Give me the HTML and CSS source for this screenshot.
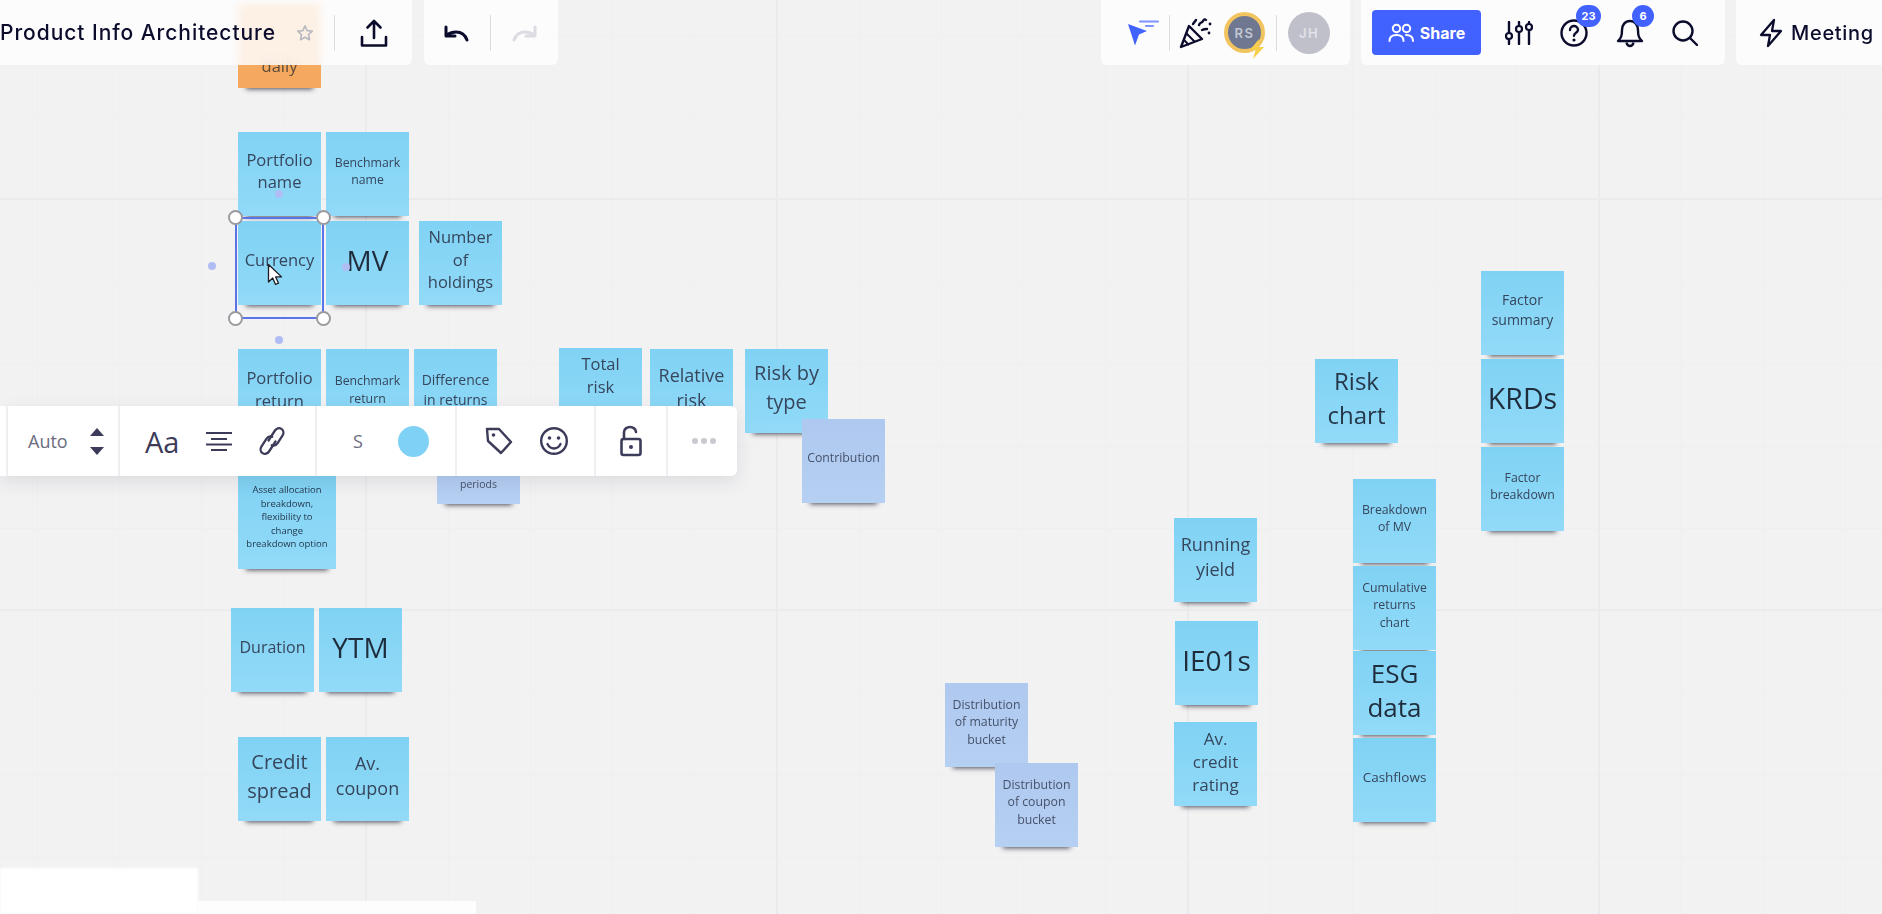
FILE: index.html
```html
<!DOCTYPE html>
<html lang="en">
<head>
<meta charset="utf-8">
<title>Product Info Architecture</title>
<link rel="stylesheet" href="styles.css">
</head>
<body>
<div class="board">
  <div class="canvas">
    <div class="sticky orange s-daily fs16"><span>daily</span></div>
    <div class="sticky s-pname fs16"><span>Portfolio<br>name</span></div>
    <div class="sticky s-bname fs12"><span>Benchmark<br>name</span></div>
    <div class="sticky s-currency fs16"><span>Currency</span></div>
    <div class="sticky s-mv fs28"><span>MV</span></div>
    <div class="sticky s-holdings fs16"><span>Number<br>of<br>holdings</span></div>
    <div class="sticky s-preturn fs16 low"><span>Portfolio<br>return</span></div>
    <div class="sticky s-breturn fs12 low"><span>Benchmark<br>return</span></div>
    <div class="sticky s-diff fs14 low"><span>Difference<br>in returns</span></div>
    <div class="sticky s-total fs16"><span>Total<br>risk<br>&nbsp;</span></div>
    <div class="sticky s-relative fs18"><span>Relative<br>risk</span></div>
    <div class="sticky s-type fs20"><span>Risk by<br>type</span></div>
    <div class="sticky violet s-contrib fs12"><span>Contribution</span></div>
    <div class="sticky s-asset fs9"><span>Asset allocation<br>breakdown,<br>flexibility to<br>change<br>breakdown option</span></div>
    <div class="sticky violet s-periods fs10"><span>periods</span></div>
    <div class="sticky s-duration fs15"><span>Duration</span></div>
    <div class="sticky s-ytm fs28"><span>YTM</span></div>
    <div class="sticky s-spread fs20"><span>Credit<br>spread</span></div>
    <div class="sticky s-coupon fs18"><span>Av.<br>coupon</span></div>
    <div class="sticky violet s-dmat fs12"><span>Distribution<br>of maturity<br>bucket</span></div>
    <div class="sticky violet s-dcou fs12"><span>Distribution<br>of coupon<br>bucket</span></div>
    <div class="sticky s-yield fs18"><span>Running<br>yield</span></div>
    <div class="sticky s-ie fs28"><span>IE01s</span></div>
    <div class="sticky s-rating fs17"><span>Av.<br>credit<br>rating</span></div>
    <div class="sticky s-bmv fs12"><span>Breakdown<br>of MV</span></div>
    <div class="sticky s-cum fs12"><span>Cumulative<br>returns<br>chart</span></div>
    <div class="sticky s-esg fs26"><span>ESG<br>data</span></div>
    <div class="sticky s-cash fs13"><span>Cashflows</span></div>
    <div class="sticky s-risk fs24"><span>Risk<br>chart</span></div>
    <div class="sticky s-fsum fs14"><span>Factor<br>summary</span></div>
    <div class="sticky s-krd fs30"><span>KRDs</span></div>
    <div class="sticky s-fbreak fs12"><span>Factor<br>breakdown</span></div>

    <div class="dot d1"></div>
    <div class="dot d2"></div>
    <div class="dot d3"></div>
    <div class="dot d4"></div>

    <div class="selection">
      <i class="handle tl"></i><i class="handle tr"></i><i class="handle bl"></i><i class="handle br"></i>
    </div>
    <svg class="pointer" width="16" height="24" viewBox="0 0 16 24"><path d="M1.5 1.5v17.5l4.2-4 2.8 6.5 3-1.3-2.8-6.3h5.8z" fill="#fff" stroke="#1c1c22" stroke-width="1.3" stroke-linejoin="round"/></svg>
  </div>

  <header class="topbar">
    <div class="group">
      <div class="panel panel-title">
        <span class="title">Product Info Architecture</span>
        <svg class="star" width="20" height="20" viewBox="0 0 24 24"><path d="M12 3.5l2.6 5.6 6.1.7-4.5 4.2 1.2 6-5.4-3-5.4 3 1.2-6-4.5-4.2 6.1-.7z" fill="none" stroke="#b9b9c0" stroke-width="2" stroke-linejoin="round"/></svg>
        <i class="vr"></i>
        <svg class="upload" width="28" height="30" viewBox="0 0 28 30"><path d="M14 20V3M7.5 9.5L14 3l6.500 6.500M2 19v8.500h24V19" fill="none" stroke="#0b0b2c" stroke-width="2.600" stroke-linecap="round" stroke-linejoin="round"/></svg>
      </div>
      <div class="panel panel-undo">
        <svg width="28" height="20" viewBox="0 0 28 20"><path d="M25 16c-2-5.500-6-8-11-8-3 0-6 .8-9 3M4 3v9h9" fill="none" stroke="#0b0b2c" stroke-width="3" stroke-linecap="round" stroke-linejoin="round" transform="translate(0 1)"/></svg>
        <i class="vr"></i>
        <svg width="28" height="20" viewBox="0 0 28 20"><path d="M3 16c2-5.500 6-8 11-8 3 0 6 .8 9 3M24 3v9h-9" fill="none" stroke="#dcdce2" stroke-width="3" stroke-linecap="round" stroke-linejoin="round" transform="translate(0 1)"/></svg>
      </div>
    </div>
    <div class="group">
      <div class="panel panel-people">
        <svg class="cursor-filter" width="32" height="26" viewBox="0 0 32 26"><path d="M1 4l19 7-8 3.500-4 11z" fill="#4262ff"/><path d="M13 1.500h18M19 6h7" stroke="#7f94ff" stroke-width="2.200" stroke-linecap="round"/></svg>
        <i class="vr"></i>
        <svg class="party" width="34" height="32" viewBox="0 0 34 32"><path d="M2 30L10 9l13 13z" fill="none" stroke="#0b0b2c" stroke-width="2.400" stroke-linejoin="round"/><path d="M7 16l9 9M5 23l5 5" stroke="#0b0b2c" stroke-width="2"/><path d="M14 7l3-4M20 8c1-3 3-2 4-4s2-2 3-1M23 13c2-1 4-1 5-1" fill="none" stroke="#0b0b2c" stroke-width="2.400" stroke-linecap="round"/><circle cx="31" cy="7" r="1.400" fill="#0b0b2c"/><circle cx="30" cy="16" r="1.400" fill="#0b0b2c"/></svg>
        <div class="avatar avatar-rs">RS
          <svg class="zap" width="16" height="20" viewBox="0 0 16 20"><path d="M10 0L1 11h5.500L4 20l11-12H9z" fill="#f7cf4a"/></svg>
        </div>
        <i class="vr"></i>
        <div class="avatar avatar-jh">JH</div>
      </div>
      <div class="panel panel-actions">
        <button class="share" type="button">
          <svg width="26" height="20" viewBox="0 0 26 20"><circle cx="8.500" cy="5.500" r="3.700" fill="none" stroke="#fff" stroke-width="2"/><circle cx="18.500" cy="5.500" r="3.700" fill="none" stroke="#fff" stroke-width="2"/><path d="M1.500 18c0-4 3-6 7-6s7 2 7 6M18 12c4 0 7 2 7 6" fill="none" stroke="#fff" stroke-width="2" stroke-linecap="round"/></svg>
          Share
        </button>
        <svg class="tune" width="28" height="24" viewBox="0 0 28 24"><path d="M4 1v10M4 19v4M14 1v3M14 12v11M24 1v1M24 10v13" stroke="#0b0b2c" stroke-width="2.400" stroke-linecap="round"/><circle cx="4" cy="15" r="3" fill="none" stroke="#0b0b2c" stroke-width="2.200"/><circle cx="14" cy="8" r="3" fill="none" stroke="#0b0b2c" stroke-width="2.200"/><circle cx="24" cy="6" r="3" fill="none" stroke="#0b0b2c" stroke-width="2.200"/></svg>
        <div class="badged help">
          <svg width="30" height="30" viewBox="0 0 30 30"><circle cx="15" cy="15" r="12.500" fill="none" stroke="#0b0b2c" stroke-width="2.400"/><path d="M11 12c0-2.500 2-4 4-4s4 1.500 4 3.800c0 3-4 3-4 6" fill="none" stroke="#0b0b2c" stroke-width="2.400" stroke-linecap="round"/><circle cx="15" cy="22" r="1.600" fill="#0b0b2c"/></svg>
          <b class="badge">23</b>
        </div>
        <div class="badged bell">
          <svg width="30" height="30" viewBox="0 0 30 30"><path d="M15 3c-5 0-8 4-8 9 0 6-1 8-4 11h24c-3-3-4-5-4-11 0-5-3-9-8-9z" fill="none" stroke="#0b0b2c" stroke-width="2.400" stroke-linejoin="round"/><path d="M11.500 24.500c.5 2.500 2 3.500 3.500 3.500s3-1 3.500-3.500" fill="none" stroke="#0b0b2c" stroke-width="2.400"/></svg>
          <b class="badge">6</b>
        </div>
        <svg class="search" width="28" height="28" viewBox="0 0 28 28"><circle cx="12" cy="12" r="9.500" fill="none" stroke="#0b0b2c" stroke-width="2.400"/><path d="M19 19l7 7" stroke="#0b0b2c" stroke-width="2.400" stroke-linecap="round"/></svg>
      </div>
      <div class="panel panel-meeting">
        <svg width="26" height="30" viewBox="0 0 26 30"><path d="M16 2L3 17h9l-2 11 13-15h-9z" fill="none" stroke="#0b0b2c" stroke-width="2.300" stroke-linejoin="round"/></svg>
        <span class="meeting">Meeting</span>
      </div>
    </div>
  </header>

  <div class="context">
    <div class="cell cell-edge"></div>
    <div class="cell cell-auto">
      <span class="auto">Auto</span>
      <span class="stepper"><i class="up"></i><i class="down"></i></span>
    </div>
    <div class="cell cell-text">
      <span class="aa">Aa</span>
      <svg width="26" height="20" viewBox="0 0 26 20"><path d="M0 2h26M5 8h16M0 13.500h26M5 19h16" stroke="#3c3c5a" stroke-width="2.200"/></svg>
      <svg width="30" height="30" viewBox="0 0 30 30"><g fill="none" stroke="#3c3c5a" stroke-width="2.300" stroke-linecap="round"><path d="M11.500 14.500l6.500-10c1.500-2.300 4.300-3 6.400-1.600s2.700 4.200 1.200 6.500l-5 7.800c-1.500 2.300-4 2.800-5.800 2"/><path d="M18.500 15.500l-6.500 10c-1.500 2.300-4.300 3-6.400 1.600s-2.700-4.200-1.200-6.500l5-7.800c1.500-2.300 4-2.800 5.800-2"/></g></svg>
    </div>
    <div class="cell cell-color">
      <span class="size">S</span>
      <i class="swatch"></i>
    </div>
    <div class="cell cell-meta">
      <svg width="30" height="30" viewBox="0 0 30 30"><path d="M3 4h12l12 13-10 11L4 16z" fill="none" stroke="#3c3c5a" stroke-width="2.400" stroke-linejoin="round" transform="translate(0 -1)"/><circle cx="9.500" cy="9" r="1.800" fill="#3c3c5a"/></svg>
      <svg width="30" height="30" viewBox="0 0 30 30"><circle cx="15" cy="15" r="12.800" fill="none" stroke="#3c3c5a" stroke-width="2.400"/><circle cx="10.500" cy="12" r="1.800" fill="#3c3c5a"/><circle cx="19.500" cy="12" r="1.800" fill="#3c3c5a"/><path d="M8.500 18c1.500 3 4 4.500 6.500 4.500s5-1.500 6.500-4.500" fill="none" stroke="#3c3c5a" stroke-width="2.400" stroke-linecap="round"/></svg>
    </div>
    <div class="cell cell-lock">
      <svg width="24" height="32" viewBox="0 0 24 32"><path d="M5 14V7c0-3 3-5 6-5s6 2 6 5" fill="none" stroke="#3c3c5a" stroke-width="2.600" stroke-linecap="round"/><rect x="2.500" y="14" width="19" height="16" rx="2" fill="none" stroke="#3c3c5a" stroke-width="2.600"/><circle cx="12" cy="22" r="2" fill="#3c3c5a"/></svg>
    </div>
    <div class="cell cell-more"><i></i><i></i><i></i></div>
  </div>

  <div class="corner-a"></div>
  <div class="corner-b"></div>
</div>
</body>
</html>
```

FILE: styles.css
```css
* { box-sizing: border-box; }
html, body { margin: 0; padding: 0; height: 100%; overflow: hidden; }
body { font-family: "Open Sans", "Liberation Sans", sans-serif; background: #f2f2f3; }

.board { position: relative; width: 1882px; height: 914px; overflow: hidden; }

.canvas {
  position: absolute; inset: 0;
  background-color: #f2f2f3;
  background-image:
    linear-gradient(to right, #ebebed 2px, transparent 2px),
    linear-gradient(to bottom, #ebebed 2px, transparent 2px),
    linear-gradient(to right, #efeff0 1px, transparent 1px),
    linear-gradient(to bottom, #efeff0 1px, transparent 1px);
  background-size: 411px 100%, 100% 411px, 82.2px 100%, 100% 82.2px;
  background-position: 365px 0, 0 198px, 37px 0, 0 35px;
}

/* sticky notes: free canvas items */
.sticky {
  position: absolute; width: 83px; height: 84px;
  display: flex; align-items: center; justify-content: center;
  padding: 0 2px 6px;
  text-align: center; color: #36465c;
  background: linear-gradient(to bottom, #80d2f4, #92daf8);
  box-shadow: 0 9px 5px -8px rgba(30, 30, 45, .8);
  filter: blur(.35px);
}
.sticky.violet { background: linear-gradient(to bottom, #aec8ef, #b6d0f3); color: #46526a; }
.sticky.orange { background: #f5a95e; color: #5d4a3a; }
.sticky.low { padding-bottom: 3px; }

.fs9 { font-size: 9.500px; line-height: 13.500px; color: #1f3348; }
.fs10 { font-size: 10.500px; line-height: 15px; }
.fs12 { font-size: 12.300px; line-height: 17.500px; }
.fs13 { font-size: 13.500px; line-height: 19px; }
.fs14 { font-size: 14px; line-height: 20px; }
.fs15 { font-size: 16px; line-height: 20px; }
.fs16 { font-size: 16.500px; line-height: 22.500px; }
.fs17 { font-size: 17px; line-height: 23px; }
.fs18 { font-size: 18px; line-height: 25px; }
.fs20 { font-size: 20px; line-height: 29px; }
.fs24 { font-size: 24px; line-height: 34px; color: #27374a; }
.fs26 { font-size: 26px; line-height: 34px; color: #1f2c3c; }
.fs28 { font-size: 28px; line-height: 34px; color: #1f2c3c; }
.fs30 { font-size: 28.500px; line-height: 36px; color: #1f2c3c; }

.s-daily { left: 238px; top: 4px; padding: 0 2px 11px; align-items: flex-end; }
.s-pname { left: 238px; top: 132px; }
.s-bname { left: 326px; top: 132px; }
.s-currency { left: 238px; top: 221px; }
.s-mv { left: 326px; top: 221px; }
.s-holdings { left: 419px; top: 221px; }
.s-preturn { left: 238px; top: 349px; }
.s-breturn { left: 326px; top: 349px; }
.s-diff { left: 414px; top: 349px; }
.s-total { left: 559px; top: 348px; }
.s-relative { left: 650px; top: 349px; }
.s-type { left: 745px; top: 349px; padding-bottom: 9px; }
.s-contrib { left: 802px; top: 419px; }
.s-asset { left: 238px; top: 471px; width: 98px; height: 98px; }
.s-periods { left: 437px; top: 420px; padding: 44px 2px 0; }
.s-duration { left: 231px; top: 608px; }
.s-ytm { left: 319px; top: 608px; }
.s-spread { left: 238px; top: 737px; }
.s-coupon { left: 326px; top: 737px; }
.s-dmat { left: 945px; top: 683px; }
.s-dcou { left: 995px; top: 763px; }
.s-yield { left: 1174px; top: 518px; }
.s-ie { left: 1175px; top: 621px; }
.s-rating { left: 1174px; top: 722px; }
.s-bmv { left: 1353px; top: 479px; }
.s-cum { left: 1353px; top: 566px; }
.s-esg { left: 1353px; top: 651px; }
.s-cash { left: 1353px; top: 738px; }
.s-risk { left: 1315px; top: 359px; }
.s-fsum { left: 1481px; top: 271px; }
.s-krd { left: 1481px; top: 359px; }
.s-fbreak { left: 1481px; top: 447px; }

/* selection frame and connector dots */
.dot { position: absolute; width: 8px; height: 8px; border-radius: 50%; background: #b0bdf5; }
.d1 { left: 208px; top: 262px; }
.d2 { left: 275px; top: 190px; }
.d3 { left: 342px; top: 263px; }
.d4 { left: 275px; top: 336px; }

.selection {
  position: absolute; left: 235px; top: 217px; width: 89px; height: 102px;
  border: 2px solid #5a73e6;
}
.handle {
  position: absolute; width: 15px; height: 15px; border-radius: 50%;
  background: #fff; border: 2px solid #9a9a9f;
}
.tl { left: -9px; top: -9px; }
.tr { right: -9px; top: -9px; }
.bl { left: -9px; bottom: -9px; }
.br { right: -9px; bottom: -9px; }
.pointer { position: absolute; left: 267px; top: 263px; }

/* top bar */
.topbar {
  position: absolute; left: 0; top: 0; right: 0; height: 65px;
  display: flex; justify-content: space-between;
  font-family: Inter, "Liberation Sans", sans-serif; color: #0b0b2c;
}
.group { display: flex; gap: 11px; }
.panel {
  display: flex; align-items: center; height: 65px;
  background: rgba(254, 254, 255, .84);
  backdrop-filter: blur(5px);
  border-radius: 0 0 6px 6px;
}
.vr { display: block; width: 1px; height: 36px; background: #dcdce0; flex: none; }

.panel-title { width: 412px; border-bottom-left-radius: 0; }
.title { font-size: 21px; font-weight: 500; letter-spacing: .95px; white-space: nowrap; width: 295px; }
.star { margin-right: 19px; }
.upload { margin-left: 25px; }

.panel-undo { width: 134px; padding-left: 18px; gap: 20px; margin-left: 1px; }

.panel-people { width: 249px; padding-left: 26px; }
.cursor-filter { margin-right: 10px; }
.panel-people .vr { margin-right: 9px; }
.party { margin-right: 11px; }
.avatar {
  position: relative; display: flex; align-items: center; justify-content: center;
  border-radius: 50%; font-weight: 600; font-size: 13px; letter-spacing: 1.5px; flex: none;
}
.avatar-rs { width: 41px; height: 41px; background: #6f7890; border: 4px solid #f2c45f; color: #c2c7d2; margin-right: 11px; }
.zap { position: absolute; right: -4px; bottom: -10px; }
.avatar-jh { width: 42px; height: 42px; margin-left: 2px; background: #bfc0ca; color: #e2e2e8; }

.panel-actions { width: 364px; padding-left: 11px; }
.share {
  display: flex; align-items: center; justify-content: center; gap: 6px;
  width: 109px; height: 45px; border: 0; border-radius: 4px;
  background: #4262ff; color: #fff;
  font-family: Inter, "Liberation Sans", sans-serif; font-size: 16px; font-weight: 700;
}
.tune { margin-left: 24px; }
.badged { position: relative; width: 30px; height: 30px; flex: none; }
.help { margin-left: 26px; }
.bell { margin-left: 26px; }
.badge {
  position: absolute; display: flex; align-items: center; justify-content: center;
  top: -13px; height: 22px; min-width: 22px; border-radius: 11px;
  background: #4262ff; color: #fff; font-size: 11px; font-weight: 700;
}
.help .badge { left: 17px; width: 25px; }
.bell .badge { left: 17px; }
.search { margin-left: 26px; }

.panel-meeting { width: 146px; padding-left: 22px; gap: 7px; border-bottom-right-radius: 0; }
.meeting { font-size: 20px; font-weight: 500; letter-spacing: .7px; white-space: nowrap; }

/* floating context toolbar */
.context {
  position: absolute; left: 0; top: 406px; width: 737px; height: 70px;
  display: flex; background: #fff;
  border-radius: 0 6px 6px 0;
  box-shadow: 0 6px 18px rgba(40, 40, 60, .1);
  color: #3c3c5a;
}
.cell { display: flex; align-items: center; border-right: 2px solid #efeff1; flex: none; }
.cell-edge { width: 8px; }
.cell-auto { width: 112px; padding-left: 20px; }
.auto { font-size: 18px; color: #6c6c7e; width: 62px; }
.stepper { display: flex; flex-direction: column; gap: 11px; }
.stepper i { display: block; width: 0; height: 0; border-left: 7px solid transparent; border-right: 7px solid transparent; }
.up { border-bottom: 8px solid #3c3c5a; }
.down { border-top: 8px solid #3c3c5a; }
.cell-text { width: 197px; padding-left: 25px; gap: 25px; }
.aa { font-size: 29px; width: 36px; }
.cell-color { width: 140px; padding-left: 36px; }
.size { font-size: 18px; color: #6c6c7e; width: 45px; }
.swatch { display: block; width: 31px; height: 31px; border-radius: 50%; background: #7fd2f5; }
.cell-meta { width: 139px; padding-left: 27px; gap: 25px; }
.cell-lock { width: 72px; padding-left: 23px; }
.cell-more { width: 70px; padding-left: 24px; gap: 3px; border-right: 0; }
.cell-more i { display: block; width: 6px; height: 6px; border-radius: 50%; background: #c9c9d0; }

/* bottom-left leftovers of hidden panels */
.corner-a { position: absolute; left: 0; top: 868px; width: 198px; height: 46px; background: #fff; filter: blur(1px); }
.corner-b { position: absolute; left: 198px; top: 901px; width: 278px; height: 13px; background: #fdfdfe; }
```
